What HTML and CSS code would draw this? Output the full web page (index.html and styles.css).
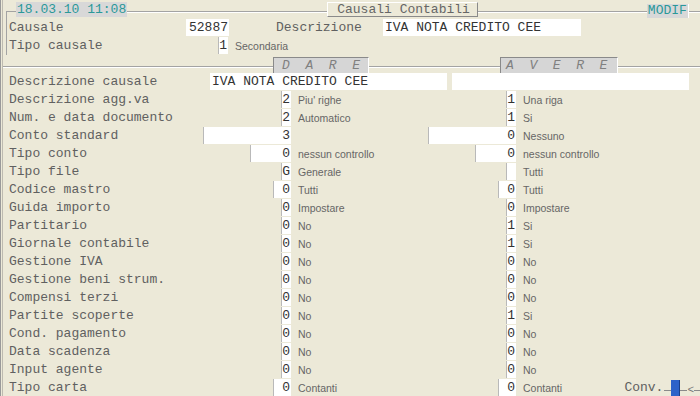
FILE: index.html
```html
<!DOCTYPE html>
<html lang="it">
<head>
  <meta charset="UTF-8" />
  <title>Causali Contabili</title>
  <link rel="stylesheet" href="styles.css">
</head>
<body>
  <div class="screen">
    <div class="topbar">
      <span class="rule lead"></span>
      <span class="stamp">18.03.10 11:08</span>
      <span class="rule gap1"></span>
      <span class="title">Causali Contabili</span>
      <span class="rule gap2"></span>
      <span class="stamp mode">MODIF</span>
      <span class="rule"></span>
    </div>

    <div class="head">
      <div class="hrow">
        <span class="hlbl">Causale</span>
        <span class="fld code">52887</span>
        <span class="hlbl2">Descrizione</span>
        <span class="fld text desc">IVA NOTA CREDITO CEE</span>
      </div>
      <div class="hrow">
        <span class="hlbl wide">Tipo causale</span>
        <span class="fld w1">1</span>
        <span class="note">Secondaria</span>
      </div>
    </div>

    <div class="sides">
      <span class="rule first"></span>
      <span class="side dare">D  A  R  E</span>
      <span class="rule mid"></span>
      <span class="side avere">A  V  E  R  E</span>
      <span class="rule"></span>
    </div>

    <div class="drow">
      <span class="lbl">Descrizione causale</span>
      <span class="fld text long">IVA NOTA CREDITO CEE</span>
      <span class="fld text long"></span>
    </div>

    <div class="row">
      <span class="lbl">Descrizione agg.va</span>
      <span class="fld w1">2</span><span class="note">Piu' righe</span>
      <span class="fld w1">1</span><span class="note">Una riga</span>
    </div>
    <div class="row">
      <span class="lbl">Num. e data documento</span>
      <span class="fld w1">2</span><span class="note">Automatico</span>
      <span class="fld w1">1</span><span class="note">Si</span>
    </div>
    <div class="row">
      <span class="lbl">Conto standard</span>
      <span class="fld w11">3</span><span class="note"></span>
      <span class="fld w11">0</span><span class="note">Nessuno</span>
    </div>
    <div class="row">
      <span class="lbl">Tipo conto</span>
      <span class="fld w5">0</span><span class="note">nessun controllo</span>
      <span class="fld w5">0</span><span class="note">nessun controllo</span>
    </div>
    <div class="row">
      <span class="lbl">Tipo file</span>
      <span class="fld w1">G</span><span class="note">Generale</span>
      <span class="fld w1"></span><span class="note">Tutti</span>
    </div>
    <div class="row">
      <span class="lbl">Codice mastro</span>
      <span class="fld w2">0</span><span class="note">Tutti</span>
      <span class="fld w2">0</span><span class="note">Tutti</span>
    </div>
    <div class="row">
      <span class="lbl">Guida importo</span>
      <span class="fld w1">0</span><span class="note">Impostare</span>
      <span class="fld w1">0</span><span class="note">Impostare</span>
    </div>
    <div class="row">
      <span class="lbl">Partitario</span>
      <span class="fld w1">0</span><span class="note">No</span>
      <span class="fld w1">1</span><span class="note">Si</span>
    </div>
    <div class="row">
      <span class="lbl">Giornale contabile</span>
      <span class="fld w1">0</span><span class="note">No</span>
      <span class="fld w1">1</span><span class="note">Si</span>
    </div>
    <div class="row">
      <span class="lbl">Gestione IVA</span>
      <span class="fld w1">0</span><span class="note">No</span>
      <span class="fld w1">0</span><span class="note">No</span>
    </div>
    <div class="row">
      <span class="lbl">Gestione beni strum.</span>
      <span class="fld w1">0</span><span class="note">No</span>
      <span class="fld w1">0</span><span class="note">No</span>
    </div>
    <div class="row">
      <span class="lbl">Compensi terzi</span>
      <span class="fld w1">0</span><span class="note">No</span>
      <span class="fld w1">0</span><span class="note">No</span>
    </div>
    <div class="row">
      <span class="lbl">Partite scoperte</span>
      <span class="fld w1">0</span><span class="note">No</span>
      <span class="fld w1">1</span><span class="note">Si</span>
    </div>
    <div class="row">
      <span class="lbl">Cond. pagamento</span>
      <span class="fld w1">0</span><span class="note">No</span>
      <span class="fld w1">0</span><span class="note">No</span>
    </div>
    <div class="row">
      <span class="lbl">Data scadenza</span>
      <span class="fld w1">0</span><span class="note">No</span>
      <span class="fld w1">0</span><span class="note">No</span>
    </div>
    <div class="row">
      <span class="lbl">Input agente</span>
      <span class="fld w1">0</span><span class="note">No</span>
      <span class="fld w1">0</span><span class="note">No</span>
    </div>
    <div class="row">
      <span class="lbl">Tipo carta</span>
      <span class="fld w2">0</span><span class="note">Contanti</span>
      <span class="fld w2">0</span>
      <span class="note last">
        Contanti
        <span class="conv">
          <span class="conv-lbl">Conv.</span>
          <span class="tick"></span>
          <span class="knob"></span>
          <span class="tick"></span>
          <span class="arrow">&lt;</span>
          <span class="tick end"></span>
        </span>
      </span>
    </div>
  </div>
</body>
</html>
```

FILE: styles.css
```css
body {
  margin: 0;
  background: #ece9d8;
}

.screen {
  width: 700px;
  height: 396px;
  overflow: hidden;
  background: #ece9d8;
  box-shadow: inset 1px 0 #9a9a9a, inset 2px 0 #ece9d8, inset 3px 0 #bdbab0;
  font-family: "Liberation Mono", "Courier New", monospace;
  font-size: 13px;
  color: #606060;
}

/* etched divider lines */
.rule {
  flex: 1;
  align-self: flex-start;
  margin-top: 11px;
  height: 0;
  border-top: 1px solid #a3a3a3;
  border-bottom: 1px solid #fff;
}

.topbar {
  display: flex;
  height: 19px;
}

.topbar .lead {
  flex: 0 0 9px;
  height: 8px;
  margin-left: 6px;
  border-left: 1px solid #a3a3a3;
  border-bottom: none;
}

.topbar .gap1 { flex: 0 0 200px; }
.topbar .gap2 { flex: 0 0 169px; }

.stamp {
  margin-top: 2px;
  height: 15px;
  line-height: 15px;
  padding: 0 1px;
  background: #d8d8d8;
  color: #2b9898;
}

.mode {
  margin-top: 4px;
  height: 14px;
  line-height: 14px;
  border-right: 1px solid #fff;
}

.title {
  margin-top: 2px;
  height: 13px;
  line-height: 14px;
  padding: 0 7px 0 9px;
  border-top: 1px solid #fff;
  border-left: 1px solid #fff;
  border-right: 1px solid #8a8a8a;
  border-bottom: 1px solid #8a8a8a;
  color: #666;
}

.head {
  margin-left: 6px;
  border-left: 1px solid #a3a3a3;
  padding-left: 2px;
}

.hrow {
  display: flex;
  height: 18px;
  line-height: 18px;
}

.hlbl {
  width: 177px;
}

.hlbl.wide {
  width: 209px;
}

.hlbl2 {
  width: 107px;
  margin-left: 47px;
}

.fld {
  align-self: start;
  box-sizing: border-box;
  height: 17px;
  line-height: 17px;
  padding-right: 1px;
  background: #fff;
  border-left: 1px solid #b9b9b9;
  color: #333;
  text-align: right;
  white-space: pre;
}

.fld.text {
  text-align: left;
  padding-left: 2px;
  border-left: none;
}

.code { width: 43px; border-left: none; }
.desc { width: 198px; }
.long { width: 237px; }
.w1 { width: 10px; }
.w2 { width: 18px; }
.w5 { width: 41px; }
.w11 { width: 88px; }

.note {
  padding-left: 7px;
  font-family: "Liberation Sans", Arial, sans-serif;
  font-size: 10.5px;
  color: #666;
  line-height: 18px;
  white-space: nowrap;
}

.sides {
  display: flex;
  height: 18px;
}

.sides .first {
  flex: 0 0 270px;
  margin-left: 3px;
}

.sides .mid {
  flex: 0 0 131px;
}

.side {
  margin-top: 2px;
  box-sizing: border-box;
  height: 16px;
  line-height: 16px;
  background: #d6d6d6;
  border-top: 1px solid #8a8a8a;
  border-left: 1px solid #8a8a8a;
  border-right: 1px solid #fff;
  color: #808080;
  font-style: italic;
  white-space: pre;
}

.dare {
  width: 96px;
  padding-left: 8px;
}

.avere {
  width: 118px;
  padding-left: 5px;
}

.drow {
  display: flex;
  gap: 5px;
  height: 18px;
  line-height: 18px;
  padding-left: 9px;
}

.drow .lbl {
  width: 196px;
}

.row {
  display: grid;
  grid-template-columns: 193px 89px 137px 88px 1fr;
  height: 18px;
  line-height: 18px;
  padding-left: 9px;
}

.row .fld {
  justify-self: end;
}

.last {
  display: flex;
  align-items: flex-start;
}

.conv {
  display: flex;
  align-items: flex-start;
  margin-left: auto;
  font-family: "Liberation Mono", "Courier New", monospace;
  font-size: 13px;
  color: #606060;
}

.conv-lbl {
  margin-right: 1px;
}

.tick {
  width: 7px;
  margin-top: 11px;
  border-top: 1px solid #8a8a8a;
}

.tick.end {
  width: 6px;
}

.knob {
  width: 8px;
  height: 17px;
  margin-top: 1px;
  background: #2d62c9;
  border-right: 1px solid #1a3f8a;
}

.arrow {
  font-size: 11px;
  color: #777;
  line-height: 22px;
}
```
